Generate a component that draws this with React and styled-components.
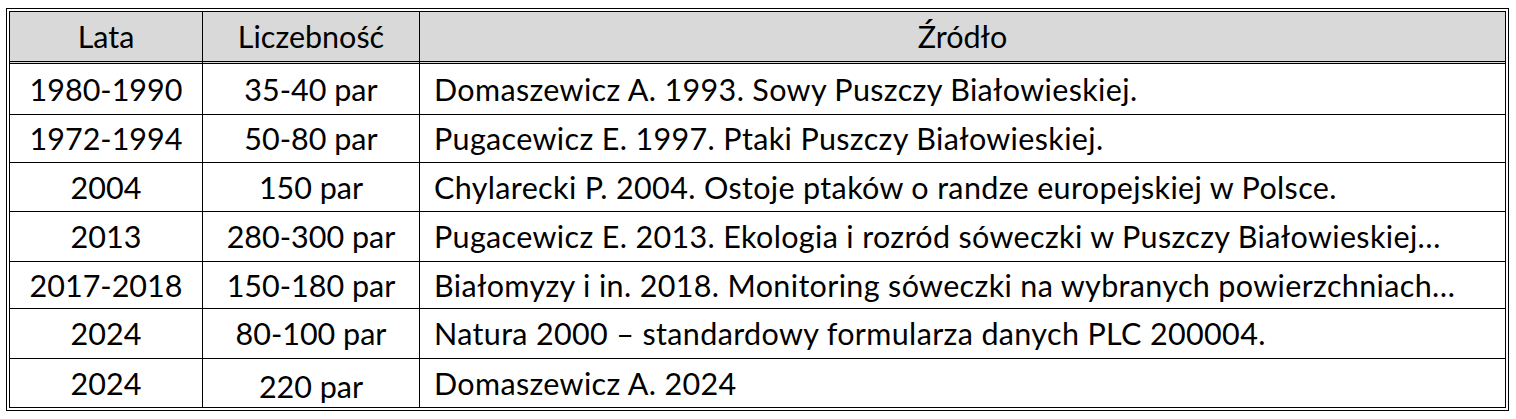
import React from "react";
import styled, { createGlobalStyle } from "styled-components";

const GlobalStyle = createGlobalStyle`
  html, body {
    margin: 0;
    padding: 0;
    background: #ffffff;
  }
  body {
    font-family: Lato, "Liberation Sans", sans-serif;
    color: #000;
  }
`;

const rows = [
  { years: "1980-1990", count: "35-40 par", source: "Domaszewicz A. 1993. Sowy Puszczy Białowieskiej." },
  { years: "1972-1994", count: "50-80 par", source: "Pugacewicz E. 1997. Ptaki Puszczy Białowieskiej." },
  { years: "2004", count: "150 par", source: "Chylarecki P. 2004. Ostoje ptaków o randze europejskiej w Polsce." },
  { years: "2013", count: "280-300 par", source: "Pugacewicz E. 2013. Ekologia i rozród sóweczki w Puszczy Białowieskiej…" },
  { years: "2017-2018", count: "150-180 par", source: "Białomyzy i in. 2018. Monitoring sóweczki na wybranych powierzchniach…" },
  { years: "2024", count: "80-100 par", source: "Natura 2000 – standardowy formularza danych PLC 200004." },
  { years: "2024", count: "220 par", source: "Domaszewicz A. 2024", shift: true },
];

const Page = styled.div`
  padding: 8px 7px 9px 6px;
`;

const Table = styled.div`
  display: grid;
  grid-template-columns: 193px 217px 1fr;
  grid-template-rows: 52px 51px 48px 49px 50px 47px 50px 48px;
  width: 1503px;
  box-sizing: border-box;
  border: 4px double #000;
`;

const HeadCell = styled.div`
  display: flex;
  align-items: center;
  justify-content: center;
  background: #d9d9d9;
  border-bottom: 3px double #000;
  border-right: ${(p) => (p.$last ? "none" : "1px solid #000")};
  font-size: 30.5px;
  line-height: 1;
`;

const Cell = styled.div`
  display: flex;
  align-items: center;
  justify-content: ${(p) => (p.$left ? "flex-start" : "center")};
  padding-left: ${(p) => (p.$left ? "14px" : "0")};
  padding-top: ${(p) => (p.$shift ? "7px" : "0")};
  letter-spacing: ${(p) => (p.$left ? "0.35px" : "0")};
  border-right: ${(p) => (p.$last ? "none" : "1px solid #000")};
  border-bottom: ${(p) => (p.$bottom ? "none" : "1px solid #000")};
  font-size: 30.5px;
  line-height: 1;
  white-space: nowrap;
  overflow: hidden;
`;

export default function App() {
  return (
    <Page>
      <GlobalStyle />
      <Table>
        <HeadCell>Lata</HeadCell>
        <HeadCell>Liczebność</HeadCell>
        <HeadCell $last>Źródło</HeadCell>
        {rows.map((r, i) => {
          const bottom = i === rows.length - 1;
          return (
            <React.Fragment key={i}>
              <Cell $bottom={bottom}>{r.years}</Cell>
              <Cell $bottom={bottom} $shift={r.shift}>{r.count}</Cell>
              <Cell $bottom={bottom} $left $last>{r.source}</Cell>
            </React.Fragment>
          );
        })}
      </Table>
    </Page>
  );
}
